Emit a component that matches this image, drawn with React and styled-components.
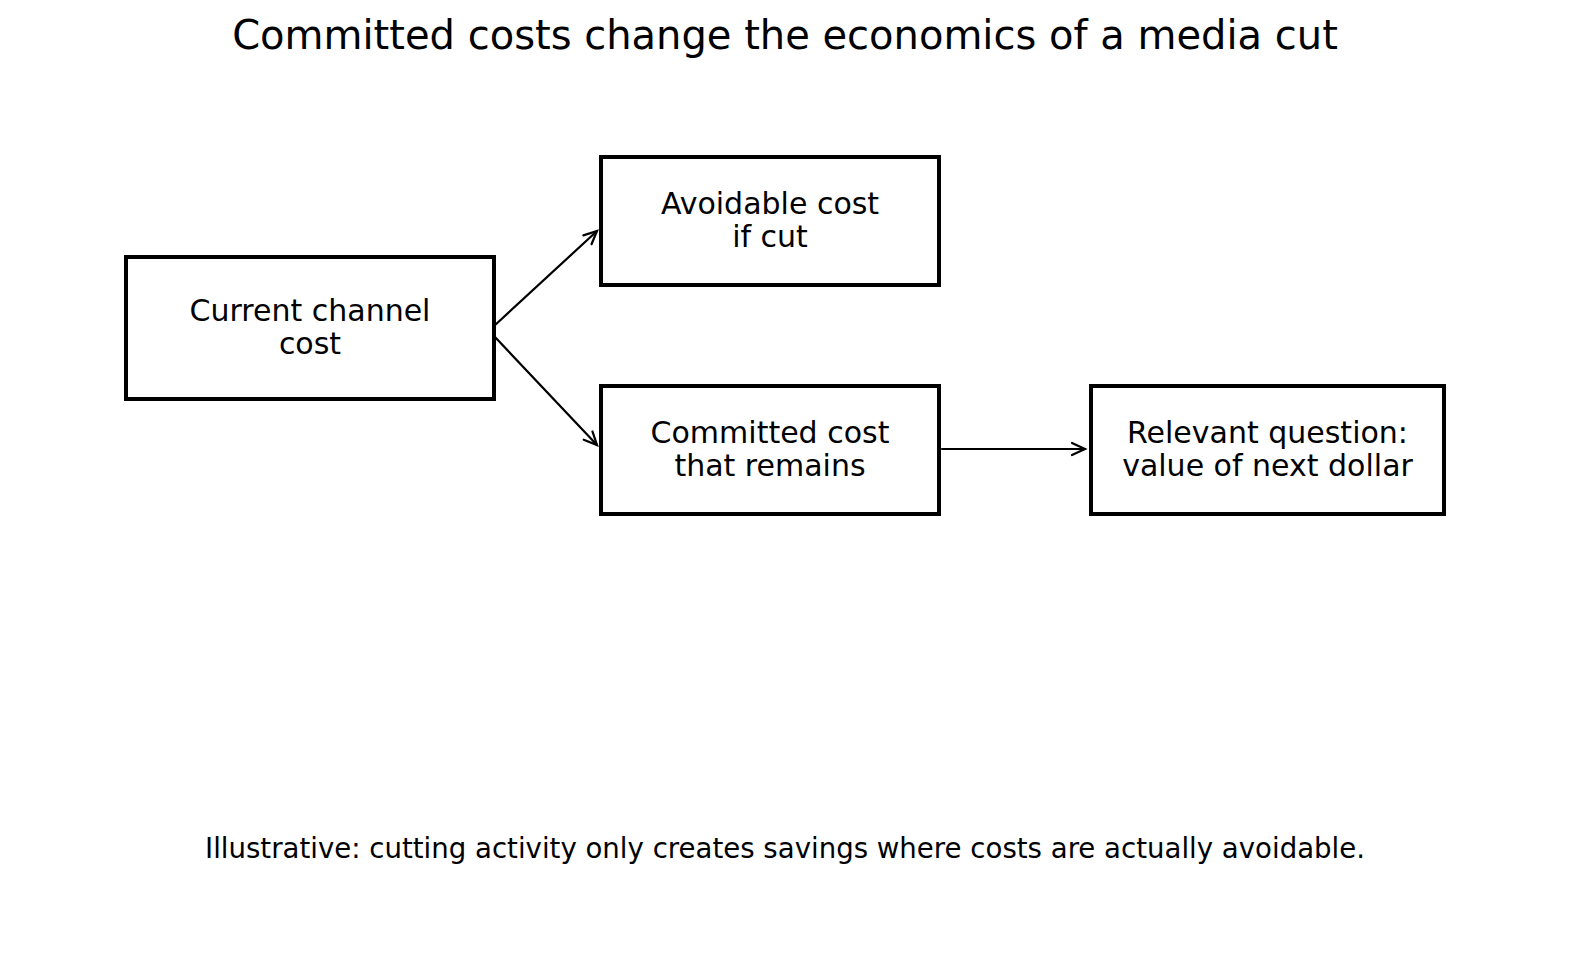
import React from "react";
import styled, { createGlobalStyle } from "styled-components";

const Global = createGlobalStyle`
  html, body { margin: 0; padding: 0; background: #ffffff; }
  body { font-family: "DejaVu Sans", "Liberation Sans", sans-serif; color: #000; }
`;

const DIAGRAM_TOP = 59;

const Page = styled.div`
  width: 1570px;
  height: 976px;
  display: flex;
  flex-direction: column;
  align-items: stretch;
  background: #fff;
  overflow: hidden;
`;

const Title = styled.h1`
  margin: 0;
  padding-top: 12px;
  font-size: 40px;
  line-height: 47px;
  font-weight: 400;
  text-align: center;
  white-space: nowrap;
`;

const Diagram = styled.div`
  position: relative;
  height: 775px;
  flex: none;
`;

const Node = styled.div`
  position: absolute;
  left: ${(p) => p.$x}px;
  top: ${(p) => p.$y - DIAGRAM_TOP}px;
  width: ${(p) => p.$w}px;
  height: ${(p) => p.$h}px;
  box-sizing: border-box;
  border: 4px solid #000;
  padding-bottom: 3px;
  background: #fff;
  display: flex;
  align-items: center;
  justify-content: center;
  text-align: center;
  font-size: 30px;
  line-height: 33px;
  white-space: pre-line;
`;

const Arrows = styled.svg`
  position: absolute;
  left: 0;
  top: 0;
  width: 100%;
  height: 100%;
  overflow: visible;
  pointer-events: none;
`;

const Footer = styled.p`
  margin: 0;
  font-size: 27.6px;
  line-height: 30px;
  text-align: center;
  white-space: nowrap;
`;

const nodes = [
  { id: "a", x: 124, y: 255, w: 372, h: 146, text: "Current channel\ncost" },
  { id: "b", x: 599, y: 155, w: 342, h: 132, text: "Avoidable cost\nif cut" },
  { id: "c", x: 599, y: 384, w: 342, h: 132, text: "Committed cost\nthat remains" },
  { id: "d", x: 1089, y: 384, w: 357, h: 132, text: "Relevant question:\nvalue of next dollar" },
];

const arrows = [
  { from: [494, 326], to: [597, 231] },
  { from: [494, 336], to: [597, 445] },
  { from: [942, 449], to: [1085, 449] },
];

function Arrow({ from, to }) {
  const [x1, y1r] = from;
  const [x2, y2r] = to;
  const y1 = y1r - DIAGRAM_TOP;
  const y2 = y2r - DIAGRAM_TOP;
  const dx = x2 - x1;
  const dy = y2 - y1;
  const len = Math.hypot(dx, dy);
  const ux = dx / len;
  const uy = dy / len;
  const hl = 13;
  const hw = 6;
  const bx = x2 - ux * hl;
  const by = y2 - uy * hl;
  const p1 = [bx - uy * hw, by + ux * hw];
  const p2 = [bx + uy * hw, by - ux * hw];
  return (
    <g stroke="#000" strokeWidth="2.2" fill="none" strokeLinecap="round" strokeLinejoin="miter">
      <line x1={x1} y1={y1} x2={x2} y2={y2} />
      <polyline points={`${p1[0]},${p1[1]} ${x2},${y2} ${p2[0]},${p2[1]}`} />
    </g>
  );
}

export default function App() {
  return (
    <>
      <Global />
      <Page>
        <Title>Committed costs change the economics of a media cut</Title>
        <Diagram>
          <Arrows>
            {arrows.map((a, i) => (
              <Arrow key={i} {...a} />
            ))}
          </Arrows>
          {nodes.map((n) => (
            <Node key={n.id} $x={n.x} $y={n.y} $w={n.w} $h={n.h}>
              {n.text}
            </Node>
          ))}
        </Diagram>
        <Footer>
          Illustrative: cutting activity only creates savings where costs are actually avoidable.
        </Footer>
      </Page>
    </>
  );
}
